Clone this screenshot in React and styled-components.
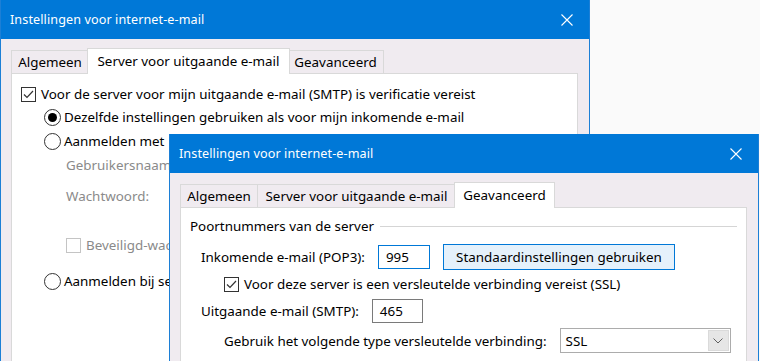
import React from 'react';
import styled, { createGlobalStyle } from 'styled-components';

const GlobalStyle = createGlobalStyle`
  html, body {
    margin: 0;
    padding: 0;
    background: #fafafa;
  }
  body {
    font-family: 'Noto Sans', 'Open Sans', sans-serif;
    font-size: 13.4px;
    color: #000;
  }
`;

const Desktop = styled.div`
  position: relative;
  width: 760px;
  height: 361px;
  overflow: hidden;
  background: #fafafa;
`;

const Window = styled.div`
  position: absolute;
  left: ${(p) => p.$x}px;
  top: ${(p) => p.$y}px;
  width: 590px;
  height: 440px;
  box-sizing: border-box;
  border: 1px solid #1c7fd6;
  border-top: none;
  background: #f0ebf0;
  display: flex;
  flex-direction: column;
`;

const TitleBar = styled.div`
  height: 39px;
  flex: none;
  background: #0078d7;
  color: #fff;
  font-size: 12.6px;
  letter-spacing: 0.1px;
  display: flex;
  align-items: center;
  justify-content: space-between;
  padding: 0 16px 0 9px;
`;

const CloseIcon = () => (
  <svg width="12" height="12" viewBox="0 0 12 12">
    <path d="M0.5 0.5 L11.5 11.5 M11.5 0.5 L0.5 11.5" stroke="#fff" strokeWidth="1.1" fill="none" />
  </svg>
);

const TabStrip = styled.div`
  height: 34px;
  flex: none;
  display: flex;
  align-items: flex-end;
  padding-left: 10px;
`;

const Tab = styled.div`
  position: relative;
  box-sizing: border-box;
  width: ${(p) => (p.$active ? p.$w + 4 : p.$w)}px;
  height: ${(p) => (p.$active ? 26 : 23)}px;
  margin: ${(p) => (p.$active ? '0 -2px -1px -2px' : '0 0 0 -1px')};
  border: 1px solid #d9d9d9;
  border-bottom: none;
  background: ${(p) => (p.$active ? '#fff' : '#f0ebf0')};
  z-index: ${(p) => (p.$active ? 2 : 1)};
  display: flex;
  align-items: center;
  justify-content: center;
  padding-bottom: ${(p) => (p.$active ? 2 : 0)}px;
  white-space: nowrap;

  &:first-child {
    margin-left: ${(p) => (p.$active ? '-2px' : '0')};
  }
`;

const Panel = styled.div`
  flex: 1;
  background: #fff;
  border: 1px solid #d9d9d9;
  margin: 0 11px 0 10px;
  padding: 9px;
  display: flex;
  flex-direction: column;
`;

const Row = styled.div`
  display: flex;
  align-items: center;
  height: ${(p) => p.$h || 22}px;
  margin-top: ${(p) => p.$mt || 0}px;
  padding-left: ${(p) => p.$indent || 0}px;
  white-space: nowrap;
  color: ${(p) => (p.$disabled ? '#8a8a8a' : '#000')};
`;

const Box = styled.span`
  box-sizing: border-box;
  width: 15px;
  height: 15px;
  flex: none;
  border: 1px solid ${(p) => (p.$disabled ? '#c4c4c4' : '#333')};
  background: #fff;
  margin-right: 5px;
  display: flex;
  align-items: center;
  justify-content: center;
`;

const Checkbox = ({ checked, disabled }) => (
  <Box $disabled={disabled}>
    {checked && (
      <svg width="13" height="13" viewBox="0 0 13 13">
        <path d="M2 6.5 L5 9.5 L11 3" stroke="#333" strokeWidth="1.2" fill="none" />
      </svg>
    )}
  </Box>
);

const Radio = styled.span`
  box-sizing: border-box;
  width: 17px;
  height: 17px;
  flex: none;
  border-radius: 50%;
  border: 1px solid #333;
  background: #fff;
  margin-right: 3px;
  display: flex;
  align-items: center;
  justify-content: center;

  &::after {
    content: '';
    width: 9px;
    height: 9px;
    border-radius: 50%;
    background: ${(p) => (p.$checked ? '#000' : 'transparent')};
  }
`;

const GroupLine = styled.span`
  flex: 1;
  height: 1px;
  background: #d5d5d5;
  margin-left: 6px;
`;

const Field = styled.span`
  box-sizing: border-box;
  width: ${(p) => p.$w}px;
  height: 24px;
  margin-left: 13px;
  border: 1px solid ${(p) => (p.$focused ? '#0078d7' : '#7a7a7a')};
  background: #fff;
  padding-left: 7px;
  display: flex;
  align-items: center;
`;

const Button = styled.span`
  box-sizing: border-box;
  width: 232px;
  height: 26px;
  margin-left: 13px;
  border: 1px solid #0078d7;
  background: #e5f1fb;
  display: flex;
  align-items: center;
  justify-content: center;
`;

const Select = styled.span`
  box-sizing: border-box;
  width: 171px;
  height: 25px;
  margin-left: 13px;
  border: 1px solid #acacac;
  background: #fff;
  padding: 0 1px 0 5px;
  display: flex;
  align-items: center;
  justify-content: space-between;
`;

const DropButton = styled.span`
  box-sizing: border-box;
  width: 21px;
  height: 21px;
  background: #e6e6e6;
  border: 1px solid #dadada;
  display: flex;
  align-items: center;
  justify-content: center;
`;

const Chevron = () => (
  <svg width="10" height="6" viewBox="0 0 10 6">
    <path d="M0.5 0.5 L5 5 L9.5 0.5" stroke="#606060" strokeWidth="1" fill="none" />
  </svg>
);

const TITLE = 'Instellingen voor internet-e-mail';

function Titled() {
  return (
    <TitleBar>
      <span>{TITLE}</span>
      <CloseIcon />
    </TitleBar>
  );
}

function Tabs({ active }) {
  const tabs = [
    { label: 'Algemeen', w: 78 },
    { label: 'Server voor uitgaande e-mail', w: 199 },
    { label: 'Geavanceerd', w: 97 },
  ];
  return (
    <TabStrip>
      {tabs.map((t, i) => (
        <Tab key={t.label} $w={t.w} $active={i === active}>
          {t.label}
        </Tab>
      ))}
    </TabStrip>
  );
}

export default function App() {
  return (
    <Desktop>
      <GlobalStyle />
      <Window $x={0} $y={0}>
        <Titled />
        <Tabs active={1} />
        <Panel>
          <Row $mt={0}>
            <Checkbox checked />
            Voor de server voor mijn uitgaande e-mail (SMTP) is verificatie vereist
          </Row>
          <Row $mt={1} $indent={23}>
            <Radio $checked />
            Dezelfde instellingen gebruiken als voor mijn inkomende e-mail
          </Row>
          <Row $mt={2} $indent={23}>
            <Radio />
            Aanmelden met
          </Row>
          <Row $mt={2} $indent={45} $disabled>
            Gebruikersnaam:
          </Row>
          <Row $mt={9} $indent={45} $disabled>
            Wachtwoord:
          </Row>
          <Row $mt={27} $indent={45} $disabled>
            <Checkbox disabled />
            Beveiligd-wachtwoordverificatie (SPA) vereisen
          </Row>
          <Row $mt={14} $indent={23}>
            <Radio />
            Aanmelden bij server voor inkomende e-mail voordat e-mail wordt verzonden
          </Row>
        </Panel>
      </Window>

      <Window $x={169} $y={134}>
        <Titled />
        <Tabs active={2} />
        <Panel>
          <Row $h={18}>
            Poortnummers van de server
            <GroupLine />
          </Row>
          <Row $h={26} $mt={9} $indent={11}>
            Inkomende e-mail (POP3):
            <Field $w={52} $focused>995</Field>
            <Button>Standaardinstellingen gebruiken</Button>
          </Row>
          <Row $h={18} $mt={5} $indent={34}>
            <Checkbox checked />
            Voor deze server is een versleutelde verbinding vereist (SSL)
          </Row>
          <Row $h={24} $mt={6} $indent={11}>
            Uitgaande e-mail (SMTP):
            <Field $w={51}>465</Field>
          </Row>
          <Row $h={25} $mt={5} $indent={34}>
            Gebruik het volgende type versleutelde verbinding:
            <Select>
              SSL
              <DropButton>
                <Chevron />
              </DropButton>
            </Select>
          </Row>
        </Panel>
      </Window>
    </Desktop>
  );
}
